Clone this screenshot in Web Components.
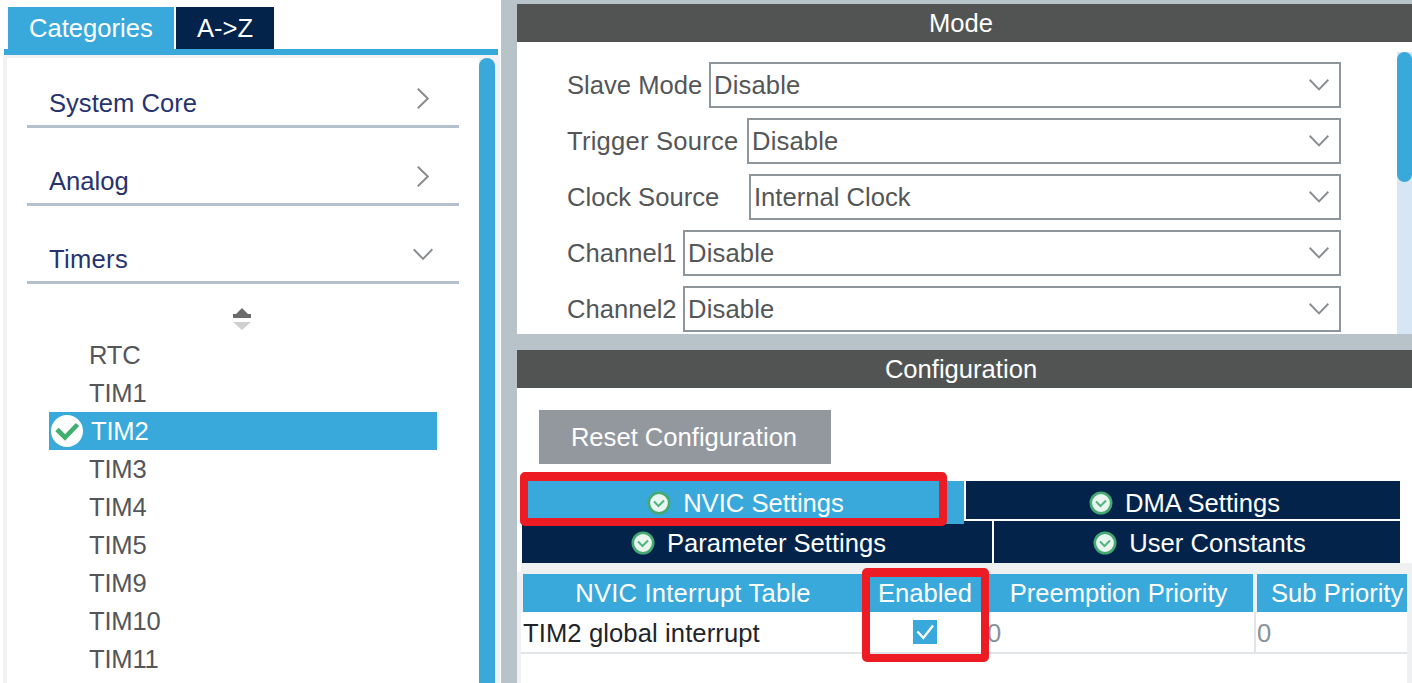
<!DOCTYPE html>
<html lang="en">
<head>
<meta charset="utf-8">
<title>TIM2 NVIC Settings</title>
<style>
  html, body { margin: 0; padding: 0; height: 683px; overflow: hidden; background: #fff; }
  body { font: 25.6px "Liberation Sans", Arial, sans-serif; color: #545658; }
</style>
</head>
<body>
<pin-app>
  <side-panel slot="side">
    <cat-row>System Core</cat-row>
    <cat-row>Analog</cat-row>
    <cat-row open style="letter-spacing:.3px">Timers</cat-row>
    <sort-mark></sort-mark>
    <list-item>RTC</list-item>
    <list-item>TIM1</list-item>
    <list-item selected>TIM2</list-item>
    <list-item>TIM3</list-item>
    <list-item>TIM4</list-item>
    <list-item>TIM5</list-item>
    <list-item>TIM9</list-item>
    <list-item>TIM10</list-item>
    <list-item>TIM11</list-item>
  </side-panel>
  <mode-panel slot="mode">
    <mode-row label="Slave Mode" offset="142" value="Disable"></mode-row>
    <mode-row label="Trigger Source" offset="180" value="Disable" style="--label-ls:.22px"></mode-row>
    <mode-row label="Clock Source" offset="182" value="Internal Clock"></mode-row>
    <mode-row label="Channel1" offset="116" value="Disable"></mode-row>
    <mode-row label="Channel2" offset="116" value="Disable"></mode-row>
  </mode-panel>
  <config-panel slot="config"></config-panel>
  <red-callout style="left:520px;top:472px;width:427px;height:54px"></red-callout>
  <red-callout style="left:862px;top:568px;width:127px;height:94px"></red-callout>
</pin-app>
<script>
  const define = (name, css, html, setup) => {
    customElements.define(name, class extends HTMLElement {
      constructor() {
        super();
        this.attachShadow({ mode: 'open' }).innerHTML = '<style>' + css + '</style>' + html;
      }
      connectedCallback() { if (setup) setup(this, this.shadowRoot); }
    });
  };
  const chevronDown = (w, h) => `<svg width="${w}" height="${h}" viewBox="0 0 20 12" fill="none" stroke="#8a8d90" stroke-width="2"><path d="M.6.8 10 10.4 19.4.8"/></svg>`;

  define('pin-app', `
    :host { display: grid; grid-template-columns: 501px 16px 895px; grid-template-rows: 683px; position: relative; width: 1412px; height: 683px; overflow: hidden; }
    .div { background: #b8c2c9; }
    .right { display: flex; flex-direction: column; min-height: 0; background: #b8c2c9; }
  `, `
    <slot name="side"></slot>
    <div class="div"></div>
    <div class="right"><slot name="mode"></slot><slot name="config"></slot></div>
    <slot></slot>
  `);

  define('side-panel', `
    :host { display: flex; flex-direction: column; background: #fff; height: 683px; overflow: hidden; padding-top: 7px; box-sizing: border-box; }
    .tabs { display: flex; gap: 2px; padding-left: 8px; height: 42px; flex: none; }
    .tab { padding: 0 20px 0 21px; width: 98px; box-sizing: border-box; line-height: 42px; color: #fff; background: #03234b; }
    .tab.on { background: #39a9dc; width: 166px; }
    .bar { height: 6px; flex: none; width: 494px; margin-left: 4px; background: #39a9dc; }
    .frame { flex: 1; min-height: 0; display: flex; margin: 0 1px 0 3px; background: #f0f2f4; padding: 3px 5px 0 4px; }
    .body { flex: 1; min-width: 0; background: #fff; padding-top: 26px; overflow: hidden; }
    .thumb { width: 16px; flex: none; background: #39a9dc; border-radius: 8px 8px 0 0; }
  `, `
    <div class="tabs"><div class="tab on">Categories</div><div class="tab">A-&gt;Z</div></div>
    <div class="bar"></div>
    <div class="frame"><div class="body"><slot></slot></div><div class="thumb"></div></div>
  `);

  define('cat-row', `
    :host { display: flex; justify-content: space-between; margin: 0 20px 34px; height: 38px; padding: 0 26px 3px 22px; border-bottom: 3px solid #b5c0cd; color: #27336f; line-height: 38px; }
    #i { display: block; }
    svg { display: block; }
    .r { margin: 4px 4px 0 0; }
    .d { margin: 8px 0 0 0; }
  `, `<span><slot></slot></span><span id="i"></span>`, (el, root) => {
    root.getElementById('i').innerHTML = el.hasAttribute('open')
      ? `<svg class="d" width="20" height="13" viewBox="0 0 20 12" fill="none" stroke="#8a8d90" stroke-width="2"><path d="M.6.8 10 10.4 19.4.8"/></svg>`
      : `<svg class="r" width="12" height="21" viewBox="0 0 12 21" fill="none" stroke="#8a8d90" stroke-width="2"><path d="M.8.7 10.8 10.5.8 20.3"/></svg>`;
  });

  define('sort-mark', `
    :host { display: flex; justify-content: center; width: 470px; height: 28px; margin-top: -10px; box-sizing: border-box; }
    svg { display: block; }
  `, `<svg width="18" height="22" viewBox="0 0 18 22"><path d="M9 0 15 6H18V10H0V6H3Z" fill="#6b6b6b"/><path d="M0 14H18L9 22Z" fill="#cfcfcf"/></svg>`);

  define('list-item', `
    :host { display: flex; align-items: center; margin-left: 42px; width: 388px; height: 38px; line-height: 38px; padding-left: 40px; box-sizing: border-box; color: #55565a; letter-spacing: -.2px; }
    :host([selected]) { background: #39a9dc; color: #fff; padding-left: 2px; }
    svg { display: none; flex: none; margin-right: 8px; }
    :host([selected]) svg { display: block; }
  `, `<svg width="32" height="32" viewBox="0 0 32 32"><circle cx="16" cy="16" r="16" fill="#fff"/><path d="M6 14.5 14 22.5 26.5 9.5" fill="none" stroke="#3fae6f" stroke-width="4.6"/></svg><slot></slot>`);

  define('head-bar', `
    :host { display: block; flex: none; height: 38px; line-height: 38px; text-align: center; background: #525453; color: #fff; padding-right: 7px; }
  `, `<slot></slot>`);

  define('mode-panel', `
    :host { display: flex; flex-direction: column; flex: none; height: 330px; margin-top: 4px; }
    .wrap { flex: 1; min-height: 0; display: flex; background: #fff; }
    .rows { flex: 1; display: flex; flex-direction: column; gap: 10px; padding: 20px 56px 0 50px; overflow: hidden; }
    .track { flex: none; width: 15px; margin-top: 10px; background: #d6e6f4; }
    .thumb { height: 130px; background: #39a9dc; border-radius: 8px; }
  `, `
    <head-bar>Mode</head-bar>
    <div class="wrap"><div class="rows"><slot></slot></div><div class="track"><div class="thumb"></div></div></div>
  `);

  define('mode-row', `
    :host { display: flex; height: 46px; flex: none; align-items: center; }
    .label { flex: none; white-space: nowrap; letter-spacing: var(--label-ls, 0); }
    .sel { flex: 1; height: 46px; box-sizing: border-box; border: 2px solid #8f969b; display: flex; align-items: center; justify-content: space-between; padding: 0 10px 0 3px; }
    .dis { letter-spacing: .15px; }
  `, `<div class="label" id="l"></div><div class="sel"><span id="v"></span>${chevronDown(20, 12)}</div>`, (el, root) => {
    const l = root.getElementById('l');
    l.textContent = el.getAttribute('label');
    l.style.width = el.getAttribute('offset') + 'px';
    const v = root.getElementById('v');
    v.textContent = el.getAttribute('value');
    if (v.textContent === 'Disable') v.className = 'dis';
  });

  define('tab-check', `
    :host { display: inline-block; width: 24px; height: 24px; flex: none; margin-top: -1px; }
    svg { display: block; }
  `, `<svg width="24" height="24" viewBox="0 0 24 24"><circle cx="12" cy="12" r="10.2" fill="#e9f5ee" stroke="#44a972" stroke-width="2.6"/><path d="M7 10.5 11.5 15 17 9.5" fill="none" stroke="#52b482" stroke-width="2"/></svg>`);

  define('set-tab', `
    :host { display: flex; align-items: center; justify-content: center; gap: 12px; height: 100%; background: #03234b; color: #fff; padding: 3px 0 0 3px; box-sizing: border-box; white-space: nowrap; }
    :host([on]) { background: #39a9dc; height: 43px; position: relative; z-index: 1; padding: 1px 0 0 5px; }
    :host([raised]) { padding-top: 6px; }
    :host([nudge]) { padding-left: 5px; }
  `, `<tab-check></tab-check><span><slot></slot></span>`);

  define('nvic-table', `
    :host { display: flex; flex-direction: column; flex: 1; min-height: 0; padding: 0 0 0 4px; background: linear-gradient(#f0f1f3, #f0f1f3) 0 9px / 4px 100% no-repeat, #fff; }
    .box { flex: 1; display: flex; flex-direction: column; background: #eff0f2; padding: 11px 5px 0 0; }
    .grid { flex: 1; background: #fff; }
    .cols { display: grid; grid-template-columns: 340px 116px 266px 150px; column-gap: 4px; }
    .th { background: #39a9dc; color: #fff; height: 38px; line-height: 38px; text-align: center; white-space: nowrap; }
    .hd { background: #eff0f2; padding-left: 2px; }
    .row { height: 40px; line-height: 42px; border-bottom: 2px solid #e2e5e8; padding-left: 2px; }
    .td { height: 40px; white-space: nowrap; }
    .name { color: #22242a; letter-spacing: .1px; }
    .num { color: #8a9199; }
    .cb { display: flex; align-items: center; justify-content: center; height: 40px; }
    .cb svg { display: block; }
    .divided { border-left: 2px solid #e2e5e8; margin-left: -3px; padding-left: 1px; height: 40px; }
    .sub { padding-left: 14px; text-align: left; }
  `, `
    <div class="box"><div class="grid">
      <div class="cols hd">
        <div class="th" style="letter-spacing:.2px">NVIC Interrupt Table</div>
        <div class="th">Enabled</div>
        <div class="th" style="padding-right:3px;box-sizing:border-box">Preemption Priority</div>
        <div class="th sub">Sub Priority</div>
      </div>
      <div class="cols row">
        <div class="td name">TIM2 global interrupt</div>
        <div class="cb"><svg width="24" height="24" viewBox="0 0 24 24"><rect width="24" height="24" fill="#39a9dc"/><path d="M4.5 11.5 10.3 18 20 5.5" fill="none" stroke="#fff" stroke-width="2.4"/></svg></div>
        <div class="td num">0</div>
        <div class="td num divided">0</div>
      </div>
    </div></div>
  `);

  define('config-panel', `
    :host { display: flex; flex-direction: column; flex: 1; min-height: 0; margin-top: 16px; background: #fff; }
    .btn { flex: none; width: 292px; height: 54px; line-height: 54px; margin: 22px 0 17px 22px; padding-right: 2px; box-sizing: border-box; text-align: center; background: #92989e; color: #fff; }
    .tabs { flex: none; margin-left: 5px; width: 878px; }
    .r1 { display: grid; grid-template-columns: 442px 434px; grid-template-rows: 38px; column-gap: 2px; height: 38px; margin-bottom: 2px; }
    .r2 { display: grid; grid-template-columns: 470px 406px; grid-template-rows: 42px; column-gap: 2px; height: 42px; }
  `, `
    <head-bar>Configuration</head-bar>
    <div class="btn">Reset Configuration</div>
    <div class="tabs">
      <div class="r1"><set-tab on>NVIC Settings</set-tab><set-tab raised>DMA Settings</set-tab></div>
      <div class="r2"><set-tab>Parameter Settings</set-tab><set-tab nudge>User Constants</set-tab></div>
    </div>
    <nvic-table></nvic-table>
  `);

  define('red-callout', `
    :host { display: block; position: absolute; box-sizing: border-box; border: solid #ed1c24; border-width: 9px 8px 8px; border-radius: 5px; z-index: 5; pointer-events: none; }
  `, ``);
</script>
</body>
</html>
